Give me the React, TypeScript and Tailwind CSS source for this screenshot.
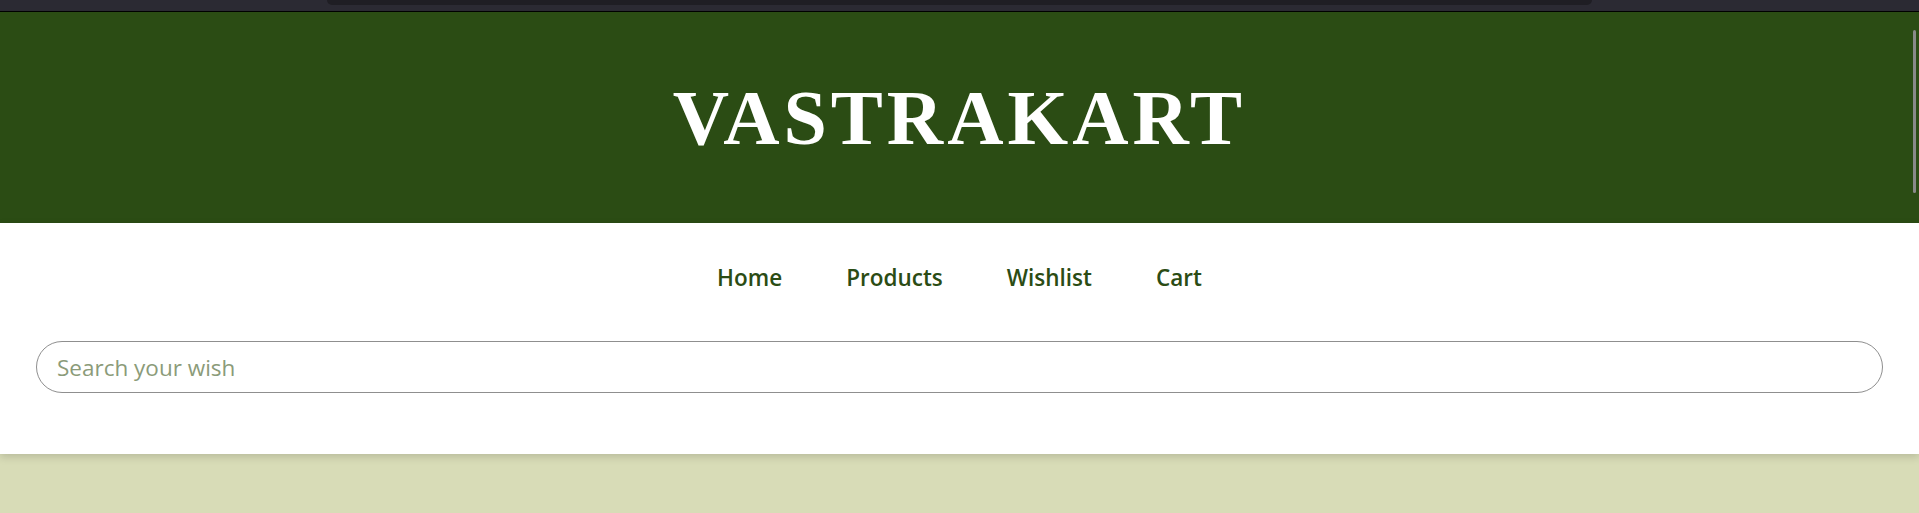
import React from "react";

export default function App() {
  return (
    <div className="relative min-h-screen bg-[#d8dcb7]" style={{ minHeight: 513 }}>
      <div className="h-[11px] bg-[#2b2a33]">
        <div className="ml-[327px] h-[5px] w-[1265px] rounded-b-md bg-[#1f1e24]" />
      </div>
      <div className="h-px bg-black" />
      <header className="flex h-[211px] items-center justify-center bg-[#2b4c14]">
        <h1 className="text-[78px] font-bold leading-none tracking-[4px] text-white [font-family:'Liberation_Serif',serif]">
          VASTRAKART
        </h1>
      </header>
      <div className="absolute right-[3px] top-[30px] h-[163px] w-[3px] rounded-full bg-[#8a8a8a]" />
      <section className="relative z-10 bg-white pb-[61px] pt-[40px] shadow-[0_3px_8px_rgba(0,0,0,0.15)]">
        <nav className="flex h-[30px] items-center justify-center gap-[64px] text-[22.5px] font-semibold text-[#2b4c14] [font-family:'Open_Sans',sans-serif]">
          <a>Home</a>
          <a>Products</a>
          <a>Wishlist</a>
          <a>Cart</a>
        </nav>
        <div className="mx-[36px] mt-[48px]">
          <input
            type="text"
            placeholder="Search your wish"
            className="h-[52px] w-full rounded-full border border-[#8f8f8f] bg-white px-[20px] text-[22.5px] outline-none placeholder:text-[#8b9b79] [font-family:'Open_Sans',sans-serif]"
          />
        </div>
      </section>
    </div>
  );
}
